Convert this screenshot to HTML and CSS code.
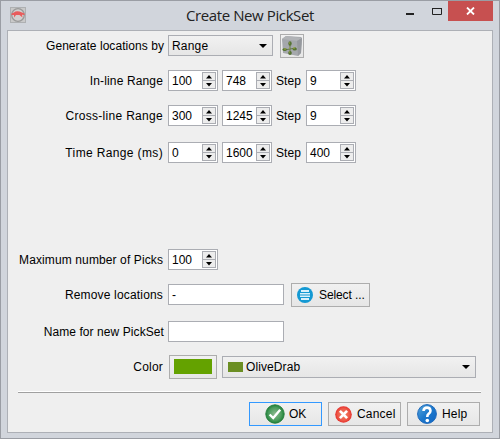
FILE: index.html
```html
<!DOCTYPE html>
<html lang="en">
<head>
<meta charset="utf-8">
<title>Create New PickSet</title>
<link rel="stylesheet" href="styles.css">
</head>
<body>
<svg width="0" height="0" class="defs">
  <defs>
    <linearGradient id="blue" x1="0" y1="0" x2="1" y2="1"><stop offset="0" stop-color="#57a7dc"/><stop offset=".5" stop-color="#1c78cc"/><stop offset="1" stop-color="#1266c4"/></linearGradient>
    <radialGradient id="green"><stop offset="0" stop-color="#8cba90"/><stop offset=".7" stop-color="#4a9c5c"/><stop offset="1" stop-color="#1f8038"/></radialGradient>
    <radialGradient id="red"><stop offset="0" stop-color="#ef8468"/><stop offset=".7" stop-color="#ee5a49"/><stop offset="1" stop-color="#e5302c"/></radialGradient>
    <symbol id="spin" viewBox="0 0 14 17">
      <path d="M7 3 10 6.5H4zM4 11h6l-3 3.5z" fill="#000"/>
    </symbol>
  </defs>
</svg>
<div class="window">
  <header class="titlebar">
    <svg class="app-icon" width="16" height="16" viewBox="0 0 16 16">
      <rect x=".5" y=".5" width="15" height="15" fill="#c9c9c9" stroke="#aeb0b2"/>
      <circle cx="8" cy="8" r="6.3" fill="#d2d0cf" stroke="#999" stroke-width="1.3"/>
      <path d="M1.5 6.5 4 5.5Q6 3.5 9.5 4.5L14.5 6.5V8L12 7.8 12.5 10.5 9.5 8 6 8 4 10.5 4 8 1.5 8z" fill="#e85c5c"/>
    </svg>
    <h1>Create New PickSet</h1>
    <div class="controls">
      <svg width="46" height="20" viewBox="0 0 46 20"><path d="M4 12h8v2H4z" fill="#222"/><path d="M30.500 7.500h9v6h-9z" fill="none" stroke="#222"/><path d="M30 7h10v1H30z" fill="#222"/></svg>
      <span class="close"><svg width="9" height="8" viewBox="0 0 9 8"><path d="M1 .5 8 7.500M8 .5 1 7.500" stroke="#fff" stroke-width="1.800"/></svg></span>
    </div>
  </header>
  <main class="content">
    <div class="row r1"><label><span>Generate locations by</span></label>
      <div class="combo range"><span>Range</span><i class="arrow"></i></div>
      <button class="cube"><svg width="22" height="22" viewBox="0 0 22 22">
        <path d="M1 4 5 1 20 2 21 3 20 18 17 21 2 18z" fill="#a5a8ac"/><path d="M1 4 16 6 21 3 5 1z" fill="#b1b3b6"/><path d="M16 6 21 3 20 18 17 21z" fill="#96999e"/>
        <path d="M9 8v11M3 15l12-2" stroke="#65784a"/>
        <g fill="#567332"><ellipse cx="9" cy="8.500" rx="1.700" ry="2.200"/><ellipse cx="9" cy="18" rx="1.800" ry="2"/><ellipse cx="3.700" cy="14.500" rx="2.200" ry="1.500"/><ellipse cx="13.700" cy="14" rx="2.200" ry="1.600"/></g>
        <path d="M8 8h1M8 17h1M3 14h2M12 13h2M8 13h1" stroke="#a2ae42"/>
      </svg></button>
    </div>
    <div class="row r2"><label><span>In-line Range</span></label>
      <div class="spinner"><span>100</span><svg class="spin"><use href="#spin"/></svg></div>
      <div class="spinner"><span>748</span><svg class="spin"><use href="#spin"/></svg></div>
      <span class="step">Step</span>
      <div class="spinner"><span>9</span><svg class="spin"><use href="#spin"/></svg></div>
    </div>
    <div class="row r3"><label><span>Cross-line Range</span></label>
      <div class="spinner"><span>300</span><svg class="spin"><use href="#spin"/></svg></div>
      <div class="spinner"><span>1245</span><svg class="spin"><use href="#spin"/></svg></div>
      <span class="step">Step</span>
      <div class="spinner"><span>9</span><svg class="spin"><use href="#spin"/></svg></div>
    </div>
    <div class="row r4"><label><span>Time Range (ms)</span></label>
      <div class="spinner"><span>0</span><svg class="spin"><use href="#spin"/></svg></div>
      <div class="spinner"><span>1600</span><svg class="spin"><use href="#spin"/></svg></div>
      <span class="step">Step</span>
      <div class="spinner"><span>400</span><svg class="spin"><use href="#spin"/></svg></div>
    </div>
    <div class="row r5"><label><span>Maximum number of Picks</span></label>
      <div class="spinner"><span>100</span><svg class="spin"><use href="#spin"/></svg></div>
    </div>
    <div class="row r6"><label><span>Remove locations</span></label>
      <div class="field">-</div>
      <button class="select"><svg width="16" height="16" viewBox="0 0 16 16"><circle cx="8" cy="8" r="8" fill="#1499d3"/><path d="M4 3h8v2H4zM3 6h10v1.500H3zM3 8.500h10V10H3zM4 11h8v2H4z" fill="#d9f0fa"/></svg><span>Select ...</span></button>
    </div>
    <div class="row r7"><label><span>Name for new PickSet</span></label>
      <div class="field"></div>
    </div>
    <div class="row r8"><label><span>Color</span></label>
      <button class="swatch"><i></i></button>
      <div class="combo color"><i class="chip"></i><span>OliveDrab</span><i class="arrow"></i></div>
    </div>
    <hr>
    <footer>
      <button class="ok"><svg width="20" height="20" viewBox="0 0 20 20"><circle cx="10" cy="10" r="9.200" fill="url(#green)" stroke="#27803e"/><path d="M4.600 10.500 8.200 14 15.200 5.800" fill="none" stroke="#fff" stroke-width="2.400"/></svg><span>OK</span></button>
      <button class="cancel"><svg width="17" height="17" viewBox="0 0 17 17"><circle cx="8.500" cy="8.500" r="8.300" fill="url(#red)"/><path d="M4.900 4.900l7.200 7.200M12.100 4.900l-7.200 7.200" stroke="#fff" stroke-width="2.700"/></svg><span>Cancel</span></button>
      <button class="help"><svg width="20" height="20" viewBox="0 0 20 20"><circle cx="10" cy="10" r="9.400" fill="url(#blue)" stroke="#1d68bb"/><path d="M6.500 7Q6.800 3.600 10 3.600T13.500 6.800Q13.500 8.800 11.400 10 10.300 10.800 10.300 13" fill="none" stroke="#fff" stroke-width="2.600"/><circle cx="10.300" cy="16.500" r="1.800" fill="#fff"/></svg><span>Help</span></button>
    </footer>
  </main>
</div>
</body>
</html>
```

FILE: styles.css
```css
* { box-sizing: border-box; }
body {
  margin: 0;
  font: 12px/14px "Liberation Sans", Arial, sans-serif;
  color: #000;
  overflow: hidden;
}
.defs { position: absolute; }
svg { display: block; flex: none; }
.window {
  width: 500px;
  height: 439px;
  padding: 0 6px 5px;
  background: #d1d5dc;
  border: 1px solid #9a9da4;
  display: flex;
  flex-direction: column;
}
.titlebar {
  height: 29px;
  flex: none;
  display: flex;
  justify-content: space-between;
}
.app-icon { margin: 6px 0 0 3px; }
h1 {
  margin: 0 0 0 160px;
  font: 400 15px/28px "Open Sans", "Noto Sans", sans-serif;
  width: 140px;
  letter-spacing: -0.4px;
  white-space: nowrap;
  color: #222;
}
.controls { display: flex; margin-left: auto; }
.close {
  width: 45px;
  height: 20px;
  background: #c75050;
  display: flex;
  align-items: center;
  justify-content: center;
}
.content {
  flex: 1;
  background: #efefef;
  border: 1px solid #adb0b6;
  display: flex;
  flex-direction: column;
}
.row {
  display: flex;
  align-items: center;
  flex: none;
  height: 24px;
}
.r1 { margin-top: 3px; }
.r2 { margin-top: 11px; }
.r3 { margin-top: 11px; }
.r4 { margin-top: 13px; }
.r5 { margin-top: 83px; }
.r6 { margin-top: 11px; }
.r7 { margin-top: 13px; }
.r8 { margin-top: 11px; }
label {
  width: 160px;
  padding-right: 5px;
  text-align: right;
  white-space: nowrap;
}
.r1 label { letter-spacing: 0.06px; padding-right: 4px; }
.r2 label { letter-spacing: 0.14px; }
.r3 label { letter-spacing: 0.3px; }
.r4 label { letter-spacing: 0.36px; }
.r5 label { letter-spacing: 0.11px; }
.r6 label { letter-spacing: 0.17px; }
.r7 label { letter-spacing: 0.08px; padding-right: 4px; }
.r8 label { letter-spacing: 0.2px; }
.combo, button, .spinner, .field {
  border: 1px solid #abadb3;
  display: flex;
  align-items: center;
  white-space: nowrap;
}
.combo, button { background: linear-gradient(#f1f1f1, #e6e6e6); }
button {
  height: 24px;
  padding: 0;
  font: inherit;
  color: inherit;
  border-color: #adadad;
}
.combo { height: 21px; padding: 0 5px 0 3px; }
.range { width: 105px; margin-bottom: 1px; letter-spacing: 0.2px; }
.cube { width: 24px; margin-left: 7px; }
.arrow {
  margin-left: auto;
  border: 4px solid transparent;
  border-top-color: #000;
  border-bottom: 0;
}
.spinner {
  width: 50px;
  height: 21px;
  padding: 0 1px 0 3px;
  margin: 0 4px 1px 0;
  background: #fff;
}
.spin {
  width: 14px;
  height: 17px;
  margin-left: auto;
  background: linear-gradient(#abadb3, #abadb3) 0 8px / 100% 1px no-repeat, #ededed;
  box-shadow: inset 0 0 0 1px #abadb3;
}
.step { width: 30px; letter-spacing: 0.1px; }
.field { width: 116px; height: 21px; margin-bottom: 1px; padding-left: 3px; background: #fff; }
.select { width: 79px; margin-left: 7px; padding-left: 5px; gap: 6px; letter-spacing: -0.1px; }
.swatch { width: 48px; margin-left: 1px; justify-content: center; }
.swatch i { width: 38px; height: 15px; margin-bottom: 1px; background: #64a200; }
.color { width: 254px; height: 22px; margin-left: 5px; padding-left: 5px; letter-spacing: 0.1px; }
.chip { width: 15px; height: 10px; margin-right: 3px; background: #6b8e23; }
hr {
  width: 463px;
  height: 2px;
  margin: 12px 0 0 10px;
  border: 0;
  border-top: 1px solid #fff;
  background: #a0a0a0;
  flex: none;
}
footer { display: flex; gap: 6px; margin: 9px 0 0 241px; }
footer button { width: 73px; }
.ok { border-color: #3399ff; padding-left: 15px; gap: 4px; }
.cancel { padding-left: 6px; gap: 5px; letter-spacing: 0.2px; }
.help { padding-left: 9px; gap: 5px; letter-spacing: 0.2px; }
```
